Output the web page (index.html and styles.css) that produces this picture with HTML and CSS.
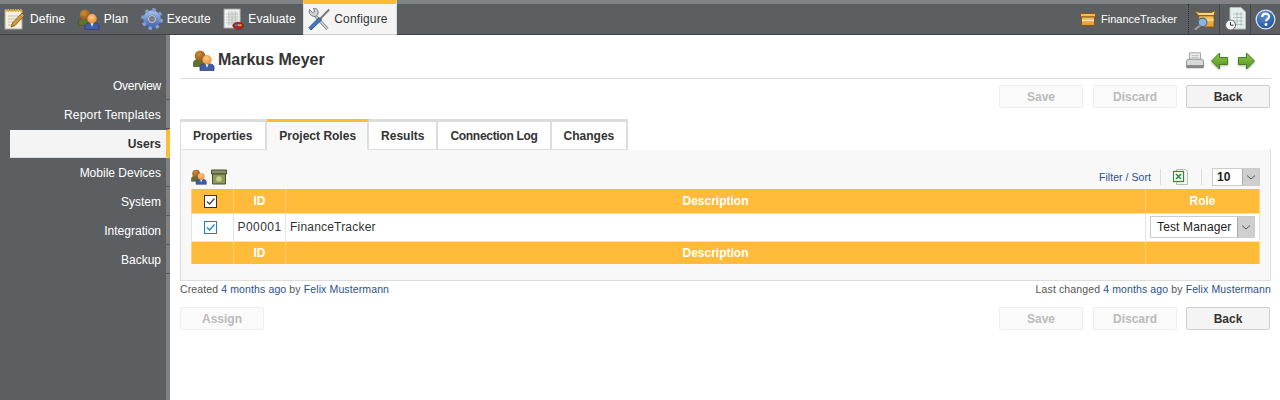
FILE: index.html
```html
<!DOCTYPE html>
<html lang="en">
<head>
<meta charset="utf-8">
<title>Markus Meyer</title>
<link rel="stylesheet" href="styles.css">
</head>
<body>
<svg class="defs" width="0" height="0" aria-hidden="true">
  <defs>
    <radialGradient id="headA" cx=".4" cy=".35" r=".7"><stop offset="0" stop-color="#d08a3a"/><stop offset="1" stop-color="#8a5518"/></radialGradient>
    <radialGradient id="headB" cx=".45" cy=".35" r=".7"><stop offset="0" stop-color="#ffc98a"/><stop offset="1" stop-color="#e88a28"/></radialGradient>
    <linearGradient id="gearG" x1="0" y1="0" x2="0" y2="1"><stop offset="0" stop-color="#9db8ea"/><stop offset="1" stop-color="#4a6cb4"/></linearGradient>
    <linearGradient id="greenG" x1="0" y1="0" x2="0" y2="1"><stop offset="0" stop-color="#8fc84a"/><stop offset="1" stop-color="#4f9220"/></linearGradient>
    <linearGradient id="boxG" x1="0" y1="0" x2="0" y2="1"><stop offset="0" stop-color="#fbc766"/><stop offset="1" stop-color="#e59a2c"/></linearGradient>
    <radialGradient id="helpG" cx=".4" cy=".3" r=".8"><stop offset="0" stop-color="#5b8fd6"/><stop offset="1" stop-color="#1f4c94"/></radialGradient>
  </defs>
  <symbol id="people" viewBox="0 0 22 21">
    <path d="M.5 16.500v-3.500c0-2.500 2-3.500 6.500-3.500s6 1.500 6 5v2z" fill="#5f7230" stroke="#46551f" stroke-width=".7"/>
    <circle cx="7" cy="5.800" r="5.300" fill="url(#headA)"/>
    <path d="M7 20.600v-3.600c0-2.500 2.500-3.300 7-3.300s7 .8 7 3.300v3.600z" fill="#3b5fa6" stroke="#4a2f78" stroke-width=".8"/>
    <path d="M12.500 14h3l-1.500 4z" fill="#e8eef6"/>
    <circle cx="14" cy="9.800" r="4.700" fill="url(#headB)"/>
  </symbol>
  <symbol id="chev" viewBox="0 0 14 14">
    <path d="M3 5.500 7 9l4-3.500" fill="none" stroke="#555" stroke-width="1"/>
  </symbol>
  <symbol id="check" viewBox="0 0 11 11">
    <path d="M2 5.500 4.600 8 9.500 2.500" fill="none" stroke-width="1.300"/>
  </symbol>
</svg>

<header class="topbar">
  <nav class="modules">
    <a class="module">
      <svg class="mod-ico" viewBox="0 0 22 22"><rect x="1" y="2.500" width="17" height="18.500" fill="#f6f1de" stroke="#a8a8a0"/><path d="M1 2.500h17" stroke="#e6b422" stroke-width="3" stroke-dasharray="1.500 1"/><path d="M4 8h11M4 11h9M4 14h6M4 17h4" stroke="#c4c0ae"/><path d="M7 19l1.500-4L18 5l2.500 2.500-9.500 10z" fill="#d29a3c" stroke="#5f4214" stroke-width=".7"/></svg>
      <span>Define</span></a>
    <a class="module">
      <svg class="mod-ico mod-people"><use href="#people"/></svg>
      <span>Plan</span></a>
    <a class="module">
      <svg class="mod-ico" viewBox="0 0 22 22"><circle cx="11" cy="11" r="6.500" fill="none" stroke="url(#gearG)" stroke-width="4.500"/><circle cx="11" cy="11" r="9.300" fill="none" stroke="#7f9fdc" stroke-width="3.200" stroke-dasharray="3.400 3.900"/><circle cx="11" cy="11" r="3.600" fill="#7d7f88" stroke="#d5dcec" stroke-width=".8"/></svg>
      <span>Execute</span></a>
    <a class="module">
      <svg class="mod-ico mod-narrow" viewBox="0 0 22 22"><rect x="1" y=".5" width="17" height="20" fill="#f3f3f1" stroke="#9a9a96"/><rect x="6" y="3" width="10" height="15" fill="#dfe3df"/><path d="M6 3v15M9.500 3v15M13 3v15M3 6h13M3 9h13M3 12h13M3 15h13" stroke="#b4b8b4" stroke-width=".7"/><ellipse cx="16" cy="18" rx="5.800" ry="3.600" fill="#b32222" stroke="#7a1212" stroke-width=".6"/><path d="M12.500 17.500h3" stroke="#3f7ab8" stroke-width="2"/><path d="M15.500 17.500h4" stroke="#d9a030" stroke-width="2"/></svg>
      <span>Evaluate</span></a>
    <a class="module active">
      <svg class="mod-ico" viewBox="0 0 22 22"><path d="M19.500 21 7 7.500" stroke="#7c8084" stroke-width="3"/><path d="M19.500 21 7 7.500" stroke="#d6d8da" stroke-width="1.400"/><path d="M7.500 8.500C3.500 8.500 0 6 1.500 1.500l3 3 2.200-1-1.200-3.500C10 -.5 11.500 5 9 7.500z" fill="#cfd2d4" stroke="#5f6366" stroke-width=".8"/><path d="M21.200 1.500 12 11" stroke="#777" stroke-width="1.800"/><path d="M1 19.500 11 9.500l2.500 2.500L3 22z" fill="#3f78bc" stroke="#1d4478" stroke-width=".8"/></svg>
      <span>Configure</span></a>
  </nav>
  <div class="tools">
    <div class="project">
      <svg class="proj-ico" viewBox="0 0 16 13"><path d="M.5.500h15v3.500H.5z" fill="#f8be54" stroke="#8a5414"/><path d="M1.500 4h13v8.500h-13z" fill="url(#boxG)" stroke="#8a5414"/><path d="M2 7.500h12" stroke="#fff0c8"/></svg>
      <span>FinanceTracker</span>
    </div>
    <a class="tool tool-dotted">
      <svg class="tool-ico" viewBox="0 0 24 22"><path d="M6 7h16v12H6z" fill="url(#boxG)" stroke="#7d4f12"/><path d="M1 1.500 6 7h16l1.500-5.500-4 2H6z" fill="#f7d68c" stroke="#7d4f12"/><path d="M6 11.500h16" stroke="#fff0c8"/><circle cx="10" cy="14" r="4.500" fill="#8fb4dc" stroke="#47688c" stroke-width="1.200"/><path d="M7 17.500 2 21.500" stroke="#a0a0a0" stroke-width="2.200"/></svg>
    </a>
    <a class="tool">
      <svg class="tool-ico tall" viewBox="0 0 21 24"><path d="M5 .5h11l4.500 4.500v17H5z" fill="#e6eeee" stroke="#b4bebe"/><path d="M8 7h10M8 10.500h10M8 14h10M8 17.500h10M12 5v14M16 5v14" stroke="#a9b8b8" stroke-width=".8"/><circle cx="5.500" cy="18" r="5" fill="#f4f4f4" stroke="#666"/><path d="M5.500 15v3.200h3" fill="none" stroke="#333"/></svg>
    </a>
    <a class="tool last">
      <svg class="tool-ico" viewBox="0 0 22 22"><circle cx="11" cy="11" r="9.800" fill="url(#helpG)" stroke="#d4e0f2" stroke-width="1.400"/><path d="M7.500 8.500c0-4.800 7.200-4.800 7.200-.6 0 2.600-3.200 2.600-3.200 5" fill="none" stroke="#fff" stroke-width="2.300"/><circle cx="11.500" cy="16.200" r="1.500" fill="#fff"/></svg>
    </a>
  </div>
</header>

<div class="shell">
  <aside class="side">
    <a class="side-item narrow">Overview</a>
    <a class="side-item wide">Report Templates</a>
    <a class="side-item current">Users</a>
    <a class="side-item">Mobile Devices</a>
    <a class="side-item">System</a>
    <a class="side-item">Integration</a>
    <a class="side-item">Backup</a>
  </aside>

  <main class="content">
    <div class="title-row">
      <svg class="title-ico"><use href="#people"/></svg>
      <h1>Markus Meyer</h1>
      <div class="title-tools">
        <svg class="print" viewBox="0 0 22 20"><path d="M5 1h12v8H5z" fill="#eef0f0" stroke="#999"/><path d="M1.500 12c0-3 1-4 3-4h13c2 0 3 1 3 4v5h-19z" fill="#d8dada" stroke="#888"/><path d="M2 14.500h18v3.500H2z" fill="#858585"/><path d="M7 4h8M7 6h8" stroke="#bbb"/></svg>
        <svg class="arrow" viewBox="0 0 17 18"><path d="M.5 9 8.500 1v4.500H16.500v7H8.500V17z" fill="url(#greenG)" stroke="#47801c"/></svg>
        <svg class="arrow next" viewBox="0 0 17 18"><path d="M16.500 9 8.500 1v4.500H.5v7h8V17z" fill="url(#greenG)" stroke="#47801c"/></svg>
      </div>
    </div>

    <div class="actions">
      <button class="btn off" type="button">Save</button>
      <button class="btn off" type="button">Discard</button>
      <button class="btn back" type="button">Back</button>
    </div>

    <div class="tabs">
      <a class="tab first">Properties</a>
      <a class="tab on">Project Roles</a>
      <a class="tab">Results</a>
      <a class="tab tight">Connection Log</a>
      <a class="tab">Changes</a>
    </div>

    <section class="panel">
      <div class="toolbar">
        <div class="tb-left">
          <svg class="tb-ico"><use href="#people"/></svg>
          <svg class="tb-ico" viewBox="0 0 16 16"><path d="M.5 1h15v4H.5z" fill="#8d916a" stroke="#474c2c"/><path d="M1.500 5h13v10h-13z" fill="#8f9a5a" stroke="#474c2c"/><circle cx="8" cy="10" r="2.800" fill="#c2cc8f"/></svg>
        </div>
        <div class="tb-right">
          <a class="filter">Filter / Sort</a>
          <span class="sep"></span>
          <svg class="xls" viewBox="0 0 16 16"><path d="M3.500.5h9l2 2v13h-11z" fill="#f4f6f4" stroke="#b5bdb5"/><rect x=".5" y="2.500" width="10" height="10" fill="#fff" stroke="#2f8a30" stroke-width="1.200"/><path d="M3 5l5 5m0-5-5 5" stroke="#2f8a30" stroke-width="1.600"/></svg>
          <span class="sep"></span>
          <div class="select small"><span class="select-val">10</span><span class="select-btn"><svg class="chev"><use href="#chev"/></svg></span></div>
        </div>
      </div>

      <table class="grid">
        <colgroup><col class="c-check"><col class="c-id"><col><col class="c-role"></colgroup>
        <thead>
          <tr>
            <th class="check-cell"><span class="box dark"><svg><use href="#check"/></svg></span></th>
            <th>ID</th><th>Description</th><th>Role</th>
          </tr>
        </thead>
        <tbody>
          <tr>
            <td class="center check-cell"><span class="box blue"><svg><use href="#check"/></svg></span></td>
            <td class="center id-cell">P00001</td>
            <td class="text-cell">FinanceTracker</td>
            <td class="role-cell"><div class="select role"><span class="select-val">Test Manager</span><span class="select-btn"><svg class="chev"><use href="#chev"/></svg></span></div></td>
          </tr>
        </tbody>
        <tfoot>
          <tr><th></th><th>ID</th><th>Description</th><th></th></tr>
        </tfoot>
      </table>
    </section>

    <div class="meta">
      <span>Created <a>4 months ago</a> by <a>Felix Mustermann</a></span>
      <span>Last changed <a>4 months ago</a> by <a>Felix Mustermann</a></span>
    </div>

    <div class="actions bottom">
      <button class="btn off" type="button">Assign</button>
      <span class="grow"></span>
      <button class="btn off" type="button">Save</button>
      <button class="btn off" type="button">Discard</button>
      <button class="btn back" type="button">Back</button>
    </div>
  </main>
</div>
</body>
</html>
```
FILE: styles.css
```css
* { box-sizing: border-box; }
html, body { margin: 0; height: 100%; overflow: hidden; }
body {
  background: #fff;
  color: #333;
  font: 12px "Liberation Sans", Arial, sans-serif;
  display: flex;
  flex-direction: column;
}
.defs { position: absolute; }
svg { display: block; }

.topbar {
  height: 35px;
  flex: none;
  display: flex;
  justify-content: space-between;
  background: #5c5f62;
  border-top: 4px solid #808284;
  border-bottom: 1px solid #404245;
}
.modules { display: flex; gap: 12.500px; padding-left: 4px; }
.module {
  display: flex;
  align-items: center;
  gap: 4px;
  color: #fff;
  letter-spacing: .1px;
}
.module.active {
  color: #333;
  background: #f4f4f4;
  border-top: 4px solid #ffbb33;
  border-left: 1px solid #ddd;
  border-right: 1px solid #ddd;
  border-bottom: 1px solid #ccc;
  margin: -4px 0 -1px -5px;
  padding: 0 8px 0 4px;
  letter-spacing: .15px;
}
.mod-ico { width: 22px; height: 22px; }
.mod-people { height: 21px; }
.mod-narrow { width: 21px; }

.tools { display: flex; }
.project {
  display: flex;
  align-items: center;
  gap: 5px;
  padding-right: 11px;
  color: #fff;
  font-size: 11px;
}
.proj-ico { width: 16px; height: 13px; }
.tool {
  width: 31px;
  display: flex;
  align-items: center;
  justify-content: center;
  border-left: 1px solid #44474a;
}
.tool.last { width: 30px; }
.tool-dotted { border-left: 1px dotted #2d2f31; }
.tool-ico { width: 23px; height: 21px; }
.tool-ico.tall { width: 21px; height: 24px; }

.shell { flex: 1; display: flex; min-height: 0; }
.side {
  width: 170px;
  flex: none;
  background: #5c5f62;
  border-right: 4px solid #7e8082;
  padding: 36px 0 0 10px;
  display: flex;
  flex-direction: column;
}
.side-item {
  position: relative;
  height: 29px;
  margin-right: -4px;
  padding: 0 9px 0 0;
  display: flex;
  align-items: center;
  justify-content: flex-end;
  color: #fff;
  font-size: 12px;
}
.side-item.wide { letter-spacing: .2px; }
.side-item.narrow { letter-spacing: -.25px; }
.side-item::after {
  content: "";
  position: absolute;
  right: 0;
  bottom: 0;
  width: 4px;
  height: 1px;
  background: #55585b;
}
.side-item.current {
  background: #f4f4f4;
  color: #333;
  font-weight: bold;
  border-top: 1px solid #5c5f62;
  border-right: 4px solid #ffbb33;
  border-bottom: 1px solid #ddd;
  padding-right: 5px;
}
.side-item.current::after { display: none; }

.content { flex: 1; min-width: 0; padding: 14px 9px 0 10px; }
.title-row {
  height: 30px;
  display: flex;
  align-items: center;
  gap: 3px;
  padding-left: 13px;
  padding-bottom: 7px;
  border-bottom: 1px solid #ddd;
}
.title-ico { width: 22px; height: 21px; }
h1 { margin: 0; font-size: 16px; font-weight: bold; color: #333; }
.title-tools {
  margin-left: auto;
  display: flex;
  align-items: center;
  gap: 6px;
  padding: 2px 16px 0 0;
}
.print { width: 20px; height: 20px; }
.arrow { width: 17px; height: 18px; filter: drop-shadow(0 1px 1px rgba(0, 0, 0, .3)); }
.arrow.next { margin-left: 4px; }

.actions {
  margin-top: 6px;
  display: flex;
  justify-content: flex-end;
  gap: 10px;
  padding-right: 1px;
}
.actions.bottom { margin-top: 10px; }
.grow { flex: 1; }
.btn {
  width: 84px;
  height: 23px;
  padding: 0;
  font: bold 12px "Liberation Sans", Arial, sans-serif;
  background: #f4f4f4;
  color: #333;
  border: 1px solid #ccc;
  border-radius: 2px;
}
.btn.off { background: #fafafa; color: #bbb; border-color: #eee; }
.btn.back { margin-left: -1px; }

.tabs {
  margin-top: 11px;
  height: 31px;
  display: flex;
  position: relative;
  z-index: 1;
}
.tab {
  display: flex;
  align-items: center;
  padding: 0 12px;
  font-weight: bold;
  background: #fff;
  border-top: 3px solid #ddd;
  border-right: 2px solid #ddd;
  border-bottom: 1px solid #ddd;
}
.tab.first { border-left: 1px solid #ddd; padding-right: 13px; }
.tab.on {
  background: #f8f8f8;
  border-top-color: #ffbb33;
  border-bottom-color: #f8f8f8;
  padding-right: 11px;
}
.tab.tight { letter-spacing: -.3px; }

.panel {
  height: 131px;
  padding: 14px 10px 0 10px;
  background: #f8f8f8;
  border: 1px solid #ddd;
  border-top: 0;
}
.toolbar {
  height: 25px;
  display: flex;
  justify-content: space-between;
  align-items: center;
}
.tb-left { display: flex; gap: 4px; align-items: center; }
.tb-ico { width: 16px; height: 16px; }
.tb-right { display: flex; align-items: center; gap: 9px; }
.filter { color: #2a4f8f; font-size: 10.500px; letter-spacing: .05px; }
.sep { width: 1px; height: 16px; background: #ddd; }
.xls { width: 16px; height: 16px; margin: 0 3px; }

.select {
  display: flex;
  align-items: stretch;
  background: #fff;
  border: 1px solid #ccc;
}
.select.small { width: 48px; height: 18px; margin-left: 1px; font-weight: bold; }
.select.small .select-val { padding-left: 4px; }
.select.role { width: 105px; height: 22px; }
.select-val { flex: 1; display: flex; align-items: center; padding-left: 6px; color: #222; }
.role .select-val { letter-spacing: .15px; }
.select-btn {
  width: 17px;
  flex: none;
  background: #cfcfcf;
  border-left: 1px solid #aaa;
  display: flex;
  align-items: center;
  justify-content: center;
}
.chev { width: 14px; height: 14px; }

.grid {
  width: 100%;
  border-collapse: collapse;
  table-layout: fixed;
  background: #fff;
}
.c-check { width: 42px; }
.c-id { width: 52px; }
.c-role { width: 114px; }
.grid th {
  height: 24px;
  padding: 0;
  background: #ffbb39;
  color: #fff;
  font-weight: bold;
  text-align: center;
  border: 1px solid #ffd37a;
  border-top: 0;
  border-bottom: 0;
}
.grid tfoot th { height: 23px; }
.grid td {
  height: 28px;
  padding: 0 4px;
  color: #333;
  border: 1px solid #e4e4e4;
}
.grid .center { text-align: center; }
.grid .id-cell { padding: 0; letter-spacing: .45px; }
.grid .text-cell { letter-spacing: .2px; }
.grid .role-cell { padding: 0 4px; }
.grid .check-cell { padding: 0 4px 0 0; }
.box {
  display: inline-flex;
  width: 13px;
  height: 13px;
  vertical-align: middle;
  background: #fff;
  border: 1px solid #333;
}
.box svg { width: 11px; height: 11px; }
.box.dark { stroke: #444; }
.box.blue { border-color: #1a80d0; stroke: #1a80d0; }

.meta {
  display: flex;
  justify-content: space-between;
  margin-top: -1px;
  height: 17px;
  align-items: center;
  font-size: 10.500px;
  letter-spacing: .12px;
  color: #555;
}
.meta a { color: #2a4f8f; }
```
